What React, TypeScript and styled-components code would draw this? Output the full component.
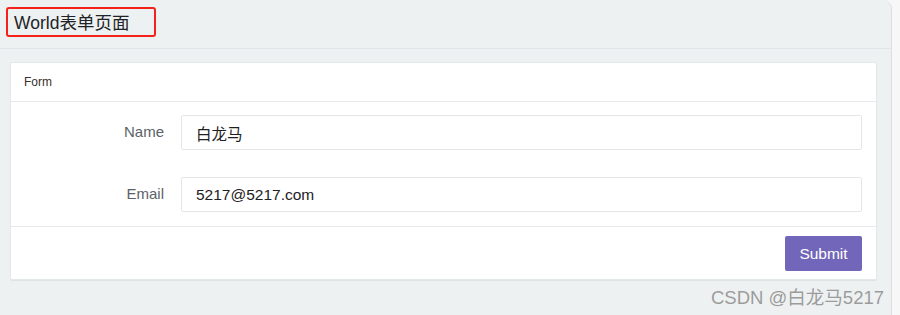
import styled, { createGlobalStyle } from "styled-components";

const GlobalStyle = createGlobalStyle`
  html, body {
    margin: 0;
    padding: 0;
    background: #f7f7f7;
    font-family: "Liberation Sans", Arial, "Noto Sans CJK SC", sans-serif;
    color: #58666e;
  }
  * { box-sizing: border-box; }
`;

const fields = [
  { label: "Name", value: "白龙马" },
  { label: "Email", value: "5217@5217.com" },
];

export default function App() {
  return (
    <>
      <GlobalStyle />
      <Panel>
        <Header>
          <Title>World表单页面</Title>
        </Header>
        <Content>
          <Card>
            <CardHeading>Form</CardHeading>
            <CardBody>
              {fields.map((f) => (
                <Row key={f.label}>
                  <Label>{f.label}</Label>
                  <Input type="text" defaultValue={f.value} />
                </Row>
              ))}
            </CardBody>
            <CardFooter>
              <Button type="button">Submit</Button>
            </CardFooter>
          </Card>
        </Content>
        <Watermark>CSDN @白龙马5217</Watermark>
      </Panel>
    </>
  );
}

const Panel = styled.div`
  position: relative;
  width: 892px;
  height: 315px;
  background: #edf1f2;
  border-right: 1px solid #dcdfe0;
  border-top-right-radius: 9px;
  overflow: hidden;
`;

const Header = styled.div`
  height: 49px;
  padding: 7px 0 0 6px;
  border-bottom: 1px solid #e0e5e7;
`;

const Title = styled.div`
  display: inline-block;
  width: 150px;
  height: 30px;
  padding: 3px 0 0 6px;
  border: 2px solid #f5221b;
  border-radius: 3px;
  font-size: 17.5px;
  line-height: 22px;
  color: #1f2326;
  white-space: nowrap;
`;

const Content = styled.div`
  padding: 13px 14px 0 10px;
`;

const Card = styled.div`
  background: #fff;
  border: 1px solid #e3e8ea;
  border-radius: 2px;
  box-shadow: 0 1px 1px rgba(0, 0, 0, 0.06);
  width: 867px;
`;

const CardHeading = styled.div`
  height: 39px;
  padding: 0 13px;
  display: flex;
  align-items: center;
  font-size: 12px;
  color: #3a2f2a;
  border-bottom: 1px solid #e6eaec;
`;

const CardBody = styled.div`
  padding: 13px 14px 14px 0;
  display: flex;
  flex-direction: column;
  gap: 27px;
  border-bottom: 1px solid #e6eaec;
`;

const Row = styled.div`
  display: grid;
  grid-template-columns: 153px 1fr;
  column-gap: 17px;
  align-items: center;
`;

const Label = styled.label`
  text-align: right;
  font-size: 15px;
  color: #5b6267;
  margin-top: -2px;
`;

const Input = styled.input`
  height: 35px;
  width: 100%;
  border: 1px solid #e4e7ea;
  border-radius: 2px;
  padding: 0 14px;
  font-size: 15.5px;
  font-family: "Liberation Sans", Arial, "Noto Sans CJK SC", sans-serif;
  color: #1d2124;
  outline: none;
  background: #fff;
`;

const CardFooter = styled.div`
  display: flex;
  justify-content: flex-end;
  padding: 9px 14px 8px;
`;

const Button = styled.button`
  width: 77px;
  height: 35px;
  background: #7266ba;
  color: #fff;
  border: none;
  border-radius: 2px;
  font-size: 15.5px;
  font-family: "Liberation Sans", Arial, sans-serif;
  cursor: pointer;
`;

const Watermark = styled.div`
  position: absolute;
  right: 7px;
  top: 283px;
  font-size: 18.5px;
  color: #9b9b9b;
  text-shadow: 0 0 1px rgba(255, 255, 255, 0.6);
  white-space: nowrap;
`;
